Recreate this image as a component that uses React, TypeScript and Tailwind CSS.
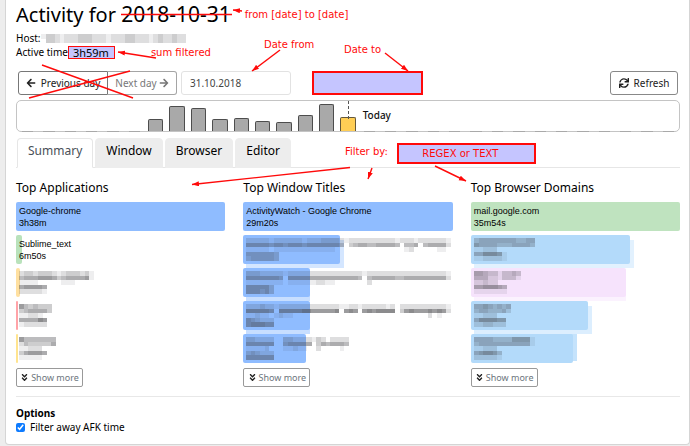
import React, { useState } from "react";
import {
  FaAngleDoubleDown,
  FaArrowLeft,
  FaArrowRight,
  FaSync,
} from "react-icons/fa";

interface SummaryItem {
  title?: string;
  duration?: string;
  width: number;
  color: string;
  // extra width of the soft edge next to the bar, in px
  glow?: number;
  glowColor?: string;
  redacted?: string[];
}

interface SummaryColumn {
  heading: string;
  items: SummaryItem[];
}

const DAYS = 31;
const TODAY = 15;

const activity: Record<number, number> = {
  6: 12,
  7: 25,
  8: 23,
  9: 12,
  10: 13,
  11: 10,
  12: 9,
  13: 16,
  14: 27,
  15: 14,
};

const tabs = ["Summary", "Window", "Browser", "Editor"];

const columns: SummaryColumn[] = [
  {
    heading: "Top Applications",
    items: [
      {
        title: "Google-chrome",
        duration: "3h38m",
        width: 100,
        color: "bg-[#8fbcff]",
      },
      {
        title: "Sublime_text",
        duration: "6m50s",
        width: 3,
        color: "bg-[#b9e2bb]",
      },
      {
        width: 2,
        color: "bg-[#ffe0a0]",
        redacted: [
          "2332333212333231",
          "4555666534555561",
          "1111000001110000",
          "566665",
          "222221",
        ],
      },
      {
        width: 1,
        color: "bg-[#ffa3a8]",
        redacted: ["6434333", "3455553", "112210", "555576", "122222"],
      },
      {
        width: 1,
        color: "bg-[#ffe48f]",
        redacted: ["64444444", "24333335", "112220", "356665", "111110"],
      },
    ],
  },
  {
    heading: "Top Window Titles",
    items: [
      {
        title: "ActivityWatch - Google Chrome",
        duration: "29m20s",
        width: 100,
        color: "bg-[#8fbcff]",
      },
      {
        width: 46,
        color: "bg-[#8fbcff]",
        glow: 4,
        glowColor: "bg-[#d4e6ff]",
        redacted: [
          "22222122222212223333212222222222122212222221",
          "55555455455545555555403455445555404450455552",
          "11111011111111111110000000000000001200000110",
          "4444443",
          "3444443",
        ],
      },
      {
        width: 32,
        color: "bg-[#8fbcff]",
        glowColor: "bg-[#c7deff]",
        redacted: [
          "33322222122222222222222221222222222222222221",
          "55555554055555555555555540455555445555555552",
          "11111111011111122110000000200000000000000000",
          "555553",
          "555453",
        ],
      },
      {
        width: 32,
        color: "bg-[#8fbcff]",
        glowColor: "bg-[#c7deff]",
        redacted: [
          "22232212222222222222112212222212022222222221",
          "66666506666677666667067606767777036766676762",
          "11211012110000000000000000000000000000020100",
          "543222",
          "566655",
        ],
      },
      {
        width: 30,
        color: "bg-[#8fbcff]",
        redacted: [
          "3322220033222213202222",
          "5555550045555503545554",
          "1111200011211002000010",
          "343222",
          "555555",
        ],
      },
    ],
  },
  {
    heading: "Top Browser Domains",
    items: [
      {
        title: "mail.google.com",
        duration: "35m54s",
        width: 100,
        color: "bg-[#bfe3bf]",
      },
      {
        width: 76,
        color: "bg-[#b3dafa]",
        glow: 4,
        glowColor: "bg-[#e2f1fe]",
        redacted: [
          "3444444443344",
          "5444433344443",
          "112220",
          "4466651",
          "1122221",
        ],
      },
      {
        width: 74,
        color: "bg-[#f6e3fc]",
        glowColor: "bg-[#fbf2fe]",
        redacted: ["5543313343", "4442213331", "223220", "5566654", "1111111"],
      },
      {
        width: 56,
        color: "bg-[#b3dafa]",
        glow: 4,
        glowColor: "bg-[#dceefe]",
        redacted: ["44543434", "34433342", "112220", "4666655", "2233222"],
      },
      {
        width: 49,
        color: "bg-[#b3dafa]",
        glow: 4,
        glowColor: "bg-[#c5e3fc]",
        redacted: [
          "4444333355551",
          "3444444444441",
          "112220",
          "456653",
          "222221",
        ],
      },
    ],
  },
];

const Redacted = ({ rows }: { rows: string[] }) => {
  const cols = Math.max(...rows.map((row) => row.length));
  return (
    <svg
      className="relative block shrink-0"
      width={Math.round((cols * 14) / 3)}
      height={Math.round((rows.length * 14) / 3)}
      viewBox={`0 0 ${cols} ${rows.length}`}
      preserveAspectRatio="none"
      shapeRendering="crispEdges"
      aria-hidden="true"
    >
      {rows.map((row, y) =>
        row
          .split("")
          .map((level, x) => (
            <rect
              key={`${x}-${y}`}
              x={x}
              y={y}
              width={1}
              height={1}
              fill="#3c3c40"
              opacity={Number(level) * 0.085}
            />
          ))
      )}
    </svg>
  );
};

const SummaryBar = ({ item }: { item: SummaryItem }) => (
  <li className="group relative h-[29px] pl-[3px] pt-[3px]">
    {item.glowColor && (
      <div
        className={`absolute left-[3px] top-[5px] h-[28px] group-last:top-0 group-last:h-[27px] ${item.glowColor}`}
        style={{ width: `calc(${item.width}% + ${(item.glow ?? 0) - 3}px)` }}
      />
    )}
    <div
      className={`absolute inset-y-0 left-0 rounded-[2px] ${item.color}`}
      style={{ width: `${item.width}%` }}
    />
    {item.redacted ? (
      <Redacted rows={item.redacted} />
    ) : (
      <div className="relative font-['Liberation_Sans',Arial,sans-serif] text-[9px] leading-3 text-black">
        <div>{item.title}</div>
        <div>{item.duration}</div>
      </div>
    )}
  </li>
);

const Timeline = () => (
  <div className="mt-[5px] grid h-8 grid-cols-[repeat(31,minmax(0,1fr))] items-end rounded-[5px] border border-[#c4c4c4]">
    {Array.from({ length: DAYS }, (_, day) => {
      const isToday = day === TODAY;
      const height = activity[day];
      return (
        <div
          key={day}
          className="relative flex h-full items-end pl-[3px] pr-[3px]"
        >
          {isToday && (
            <>
              <div className="absolute left-1/2 top-0 h-[18px] border-l border-dashed border-[#555]" />
              <span className="absolute left-full top-[7px] pl-1 text-[10px] font-medium leading-[14px] text-[#111]">
                Today
              </span>
            </>
          )}
          {height ? (
            <div
              className={`w-full rounded-t-[2px] border border-b-0 ${
                isToday
                  ? "border-[#65583a] bg-[#ffce55]"
                  : "border-[#4d4d4d] bg-[#a9a9a9]"
              }`}
              style={{ height }}
            />
          ) : (
            <div className="mx-[2px] -mb-px h-px w-full bg-[#a9a9a9]" />
          )}
        </div>
      );
    })}
  </div>
);

const Annotations = () => (
  <svg
    className="pointer-events-none absolute left-0 top-0"
    width="690"
    height="446"
    fill="none"
    stroke="#ff0a0a"
    strokeWidth="1.4"
    aria-hidden="true"
  >
    <defs>
      <marker
        id="arrow"
        markerUnits="userSpaceOnUse"
        markerWidth="8"
        markerHeight="6"
        refX="7"
        refY="2.5"
        orient="auto"
      >
        <path d="M0 0 L7 2.5 L0 5 Z" fill="#ff0a0a" stroke="none" />
      </marker>
    </defs>
    <path d="M121 14.500H232" />
    <path d="M42 65L133 98M130 71L29 98" />
    <path d="M242 11L233 10" markerEnd="url(#arrow)" />
    <path d="M156 58L118 52" markerEnd="url(#arrow)" />
    <path d="M280 50L252 71" markerEnd="url(#arrow)" />
    <path d="M385 53L408 71" markerEnd="url(#arrow)" />
    <path d="M350 167.500L192 184.500" markerEnd="url(#arrow)" />
    <path d="M372 168L368 179" markerEnd="url(#arrow)" />
    <path d="M435 166L466 181" markerEnd="url(#arrow)" />
  </svg>
);

export default function App() {
  const [activeTab, setActiveTab] = useState("Summary");
  const [dateFrom, setDateFrom] = useState("31.10.2018");
  const [dateTo, setDateTo] = useState("");
  const [filter, setFilter] = useState("REGEX or TEXT");
  const [filterAfk, setFilterAfk] = useState(true);

  return (
    <div className="relative min-h-screen bg-[#ededed] pl-[5px] font-['Noto_Sans',sans-serif] text-[10px] text-black">
      <main className="rounded-b-[4px] border border-t-0 border-[#d5d5d5] bg-white pb-[10px] pl-[10px] pr-[9px]">
        <div className="flex h-7 items-center">
          <h1 className="text-[20px] leading-7">
            Activity for <span className="text-[21px]">2018-10-31</span>
          </h1>
          <span className="ml-[14px] font-['DejaVu_Sans',sans-serif] text-[#ff0a0a]">
            from [date] to [date]
          </span>
        </div>

        <div className="mt-[3px] flex h-[14px] items-center">
          <span>Host:</span>
          <Redacted
            rows={[
              "1332122233322212223322212322322",
              "0332122233322212223322212322322",
            ]}
          />
        </div>
        <div className="flex h-[14px] items-center">
          <span>Active time</span>
          <span className="w-[47px] border border-[#ff0a0a] bg-[#c5c5ff] pl-1 text-[11px] leading-[11px]">
            3h59m
          </span>
          <span className="ml-9 font-['DejaVu_Sans',sans-serif] text-[#ff0a0a]">
            sum filtered
          </span>
        </div>

        <div className="mt-3 flex h-6 pl-[2px] pr-[2px]">
          <div className="flex">
            <button
              type="button"
              className="flex w-[90px] items-center justify-center gap-[5px] rounded-l-[3px] border border-[#777] text-[#222]"
            >
              <FaArrowLeft />
              Previous day
            </button>
            <button
              type="button"
              className="flex w-[69px] items-center justify-center gap-[2px] rounded-r-[3px] border border-l-0 border-[#a5a5a5] text-[#777]"
            >
              Next day
              <FaArrowRight />
            </button>
          </div>

          <div className="relative ml-1 w-[110px]">
            <label
              htmlFor="date-from"
              className="absolute bottom-full left-[83px] mb-[19px] whitespace-nowrap font-['DejaVu_Sans',sans-serif] leading-[14px] text-[#ff0a0a]"
            >
              Date from
            </label>
            <input
              id="date-from"
              type="text"
              value={dateFrom}
              onChange={(e) => setDateFrom(e.target.value)}
              className="h-full w-full rounded-[3px] border border-[#e2e2e2] px-2 text-[#444]"
            />
          </div>

          <div className="relative ml-[21px] w-[111px]">
            <label
              htmlFor="date-to"
              className="absolute bottom-full left-8 mb-[14px] whitespace-nowrap font-['DejaVu_Sans',sans-serif] leading-[14px] text-[#ff0a0a]"
            >
              Date to
            </label>
            <input
              id="date-to"
              type="text"
              value={dateTo}
              onChange={(e) => setDateTo(e.target.value)}
              className="h-full w-full border-2 border-[#ff0a0a] bg-[#c5c5ff] px-2"
            />
          </div>

          <button
            type="button"
            className="ml-auto flex w-[68px] items-center justify-center gap-[5px] rounded-[3px] border border-[#888] text-[#222]"
          >
            <FaSync />
            Refresh
          </button>
        </div>

        <Timeline />

        <div className="mt-[6px] flex h-[30px] items-end border-b border-[#e6e6e6] pl-px">
          <nav className="-mb-px flex gap-[2px]">
            {tabs.map((tab) => (
              <button
                key={tab}
                type="button"
                onClick={() => setActiveTab(tab)}
                className={`h-[30px] rounded-t-[4px] border px-[10px] pb-1 text-[12px] ${
                  tab === activeTab
                    ? "border-[#e6e6e6] border-b-white bg-white text-[#495057]"
                    : "border-[#ededed] bg-[#ededed] text-black"
                }`}
              >
                {tab}
              </button>
            ))}
          </nav>
          <div className="ml-[54px] flex h-6 items-start">
            <label
              htmlFor="filter"
              className="mr-[9px] mt-[2px] whitespace-nowrap font-['DejaVu_Sans',sans-serif] leading-[14px] text-[#ff0a0a]"
            >
              Filter by:
            </label>
            <input
              id="filter"
              type="text"
              value={filter}
              onChange={(e) => setFilter(e.target.value)}
              className="h-[21px] w-[139px] border-2 border-[#ff0a0a] bg-[#c5c5ff] pr-3 text-center font-['DejaVu_Sans',sans-serif] text-[#ff0a0a]"
            />
          </div>
        </div>

        <div className="mt-[10px] grid grid-cols-3 gap-[18px]">
          {columns.map((column) => (
            <section key={column.heading}>
              <h2 className="text-[12px] leading-5">{column.heading}</h2>
              <ul className="mt-1 flex flex-col gap-1">
                {column.items.map((item, index) => (
                  <SummaryBar key={index} item={item} />
                ))}
              </ul>
              <button
                type="button"
                className="mt-[5px] flex h-[19px] w-[67px] items-center justify-center gap-[2px] rounded-[2px] border border-[#999] text-[9px] text-[#6c757d]"
              >
                <FaAngleDoubleDown className="text-[#222]" />
                Show more
              </button>
            </section>
          ))}
        </div>

        <hr className="mt-[9px] border-[#e8e8e8]" />

        <h3 className="mt-2 text-[10px] font-bold leading-4">Options</h3>
        <label className="flex h-[13px] items-center gap-[5px]">
          <input
            type="checkbox"
            checked={filterAfk}
            onChange={(e) => setFilterAfk(e.target.checked)}
            className="h-[9px] w-[9px] accent-[#0d7bff]"
          />
          Filter away AFK time
        </label>
      </main>
      <Annotations />
    </div>
  );
}
